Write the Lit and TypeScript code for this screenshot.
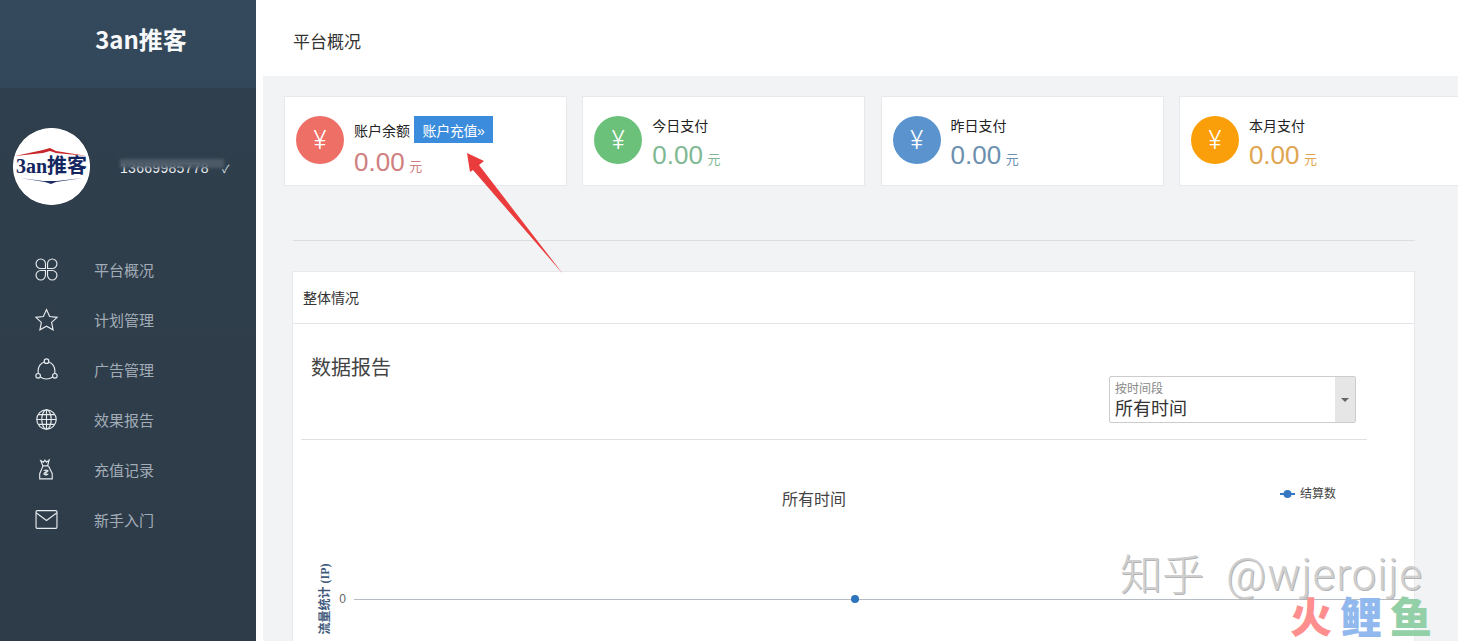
import { LitElement, html, css, svg } from "lit";
import { customElement } from "lit/decorators.js";

const icons = [
  svg`<path d="M10 10H5.500a4.500 4.500 0 1 1 4.500-4.500zM12 10V5.500a4.500 4.500 0 1 1 4.500 4.500zM10 12H5.500a4.500 4.500 0 1 0 4.500 4.500zM12 12v4.500a4.500 4.500 0 1 0 4.500-4.500z" />`,
  svg`<path d="M11 1.500l3 6.600 7.200.8-5.300 4.900 1.400 7.100L11 17.400l-6.300 3.500 1.400-7.100L.8 8.900 8 8.100z" />`,
  svg`<circle cx="11" cy="3" r="2.200"/><circle cx="3" cy="17" r="2.200"/><circle cx="19" cy="17" r="2.200"/><path d="M8.900 3.800C5.500 5 3 8.500 3 12.500c0 .7 0 1.500.2 2.200M13.100 3.800C16.500 5 19 8.500 19 12.500c0 .7 0 1.500-.2 2.200M5.100 18.100c3.400 2.600 8.400 2.600 11.800 0" />`,
  svg`<circle cx="11" cy="11" r="9.300"/><ellipse cx="11" cy="11" rx="4.500" ry="9.300"/><path d="M11 1.700v18.600M1.700 11h18.600M3 6.300h16M3 15.700h16"/>`,
  svg`<path d="M7.500 7.500L5.500 2.500l2.500 1.500L9.500 2l1.500 2 2.500-2-1.500 5.500zM7.500 7.500h5.500M7.500 8l-3 7v5h12v-5l-3.500-7M8.500 12.500c0-1.200 4-1.500 4 0 0 1.500-4 1-4 2.500 0 1.500 4 1.200 4 0M10.500 11v6" />`,
  svg`<rect x="1" y="2.500" width="20" height="17" rx="1"/><path d="M1 4.500l10 7.500 10-7.500" />`,
];

const navItems = ["平台概况", "计划管理", "广告管理", "效果报告", "充值记录", "新手入门"];

const cards = [
  { label: "账户余额", cls: "red", cta: true },
  { label: "今日支付", cls: "green", cta: false },
  { label: "昨日支付", cls: "blue", cta: false },
  { label: "本月支付", cls: "orange", cta: false },
];

@customElement("app-root")
export class AppRoot extends LitElement {
  static styles = css`
    :host { display: block; width: 1458px; height: 641px; overflow: hidden; position: relative; background: #fff; font-family: "Liberation Sans", "Noto Sans CJK SC", sans-serif; }
    .layout { display: flex; height: 641px; }
    .side { width: 256px; flex: none; background: linear-gradient(180deg, #303f4d 0%, #2e3c49 100%); color: #fff; }
    .brand { height: 88px; display: flex; align-items: center; justify-content: center; padding: 0 0 11px 26px; box-sizing: border-box; font-size: 24px; font-weight: 700; color: #f6f8f9; background: linear-gradient(180deg, #34495b, #33475a); font-family: "Noto Sans CJK SC", sans-serif; }
    .user { display: flex; align-items: center; height: 77px; margin-top: 40px; padding-left: 13px; position: relative; }
    .avatar { width: 77px; height: 77px; border-radius: 50%; background: #fff; flex: none; }
    .phone { margin-left: 30px; margin-top: 2px; font-size: 14px; color: #eef1f3; white-space: nowrap; letter-spacing: .3px; }
    .phone span { margin-left: 13px; font-size: 11px; color: #dfe4e8; }
    .smudge { position: absolute; left: 120px; top: 31px; width: 104px; height: 9px; background: #4e5c6a; filter: blur(1.500px); opacity: .95; }
    nav { margin-top: 39px; }
    .item { display: flex; align-items: center; height: 50px; padding-left: 35px; font-size: 15px; color: #a3adb8; }
    .item svg { width: 23px; height: 23px; flex: none; fill: none; stroke: #e6ebee; stroke-width: 1.100; }
    .item b { font-weight: 400; margin-left: 36px; }
    .wrap { flex: 1; min-width: 0; padding-left: 7px; }
    .top { height: 76px; display: flex; align-items: center; padding: 4px 0 0 30px; box-sizing: border-box; font-size: 17px; color: #333; }
    .page { height: 565px; background: #f1f3f5; padding: 20px 0 0 21px; box-sizing: border-box; overflow: hidden; }
    .cards { display: flex; gap: 15.300px; width: 1300px; }
    .card { width: 283px; height: 90px; flex: none; box-sizing: border-box; background: #fff; border: 1px solid #e7e9ec; display: flex; padding: 19px 0 0 11px; }
    .coin { width: 48px; height: 48px; border-radius: 50%; flex: none; color: #fff; font-size: 25px; font-weight: 300; font-family: Roboto, sans-serif; display: flex; align-items: center; justify-content: center; }
    .text { margin-left: 10px; }
    .label { font-size: 14px; color: #222; height: 22px; display: flex; align-items: center; margin-top: -2px; }
    .card.cta .label { margin-top: 0; height: 27px; }
    .btn { margin-left: 4px; height: 27px; width: 79px; display: flex; align-items: center; justify-content: center; background: #3b8cdc; color: #fff; font-size: 14px; letter-spacing: -.4px; }
    .value { font-size: 26px; line-height: 30px; margin-top: 4px; white-space: nowrap; }
    .value small { font-size: 13px; margin-left: 1px; }
    .red .coin { background: #ee6f66; } .red .value { color: #d08080; }
    .green .coin { background: #6cc17a; } .green .value { color: #7fb994; }
    .blue .coin { background: #5b93cf; } .blue .value { color: #6c90ae; }
    .orange .coin { background: #fa9f0a; } .orange .value { color: #e0a550; }
    .rule { width: 1122px; height: 1px; margin: 54px 0 0 9px; background: #dcdfe2; }
    .panel { width: 1123px; margin: 30px 0 0 8px; box-sizing: border-box; background: #fff; border: 1px solid #e7e9ec; height: 400px; }
    .panel-head { height: 52px; box-sizing: border-box; border-bottom: 1px solid #e2e4e7; display: flex; align-items: center; padding: 0 0 1px 10px; font-size: 14px; color: #333; }
    .title-row { display: flex; justify-content: space-between; height: 116px; box-sizing: border-box; margin-left: 8px; width: 1066px; border-bottom: 1px solid #dfe1e3; }
    h2 { margin: 29px 0 0 10px; font-size: 20px; font-weight: 400; color: #444; line-height: 30px; }
    .select { margin: 52px 11px 0 0; width: 247px; height: 47px; box-sizing: border-box; border: 1px solid #ccc; border-radius: 2px; display: flex; }
    .sel-text { flex: 1; padding: 4px 0 0 5px; }
    .sel-text div:first-child { font-size: 12px; color: #888; line-height: 16px; }
    .sel-text div:last-child { font-size: 18px; color: #333; line-height: 24px; }
    .caret { width: 20px; background: #e6e6e6; display: flex; align-items: center; justify-content: center; }
    .caret i { width: 0; height: 0; border: 4px solid transparent; border-top: 4px solid #666; border-bottom: 0; }
    .chart { display: block; width: 1121px; height: 201px; }
    .chart text { font-family: "Liberation Sans", "Noto Sans CJK SC", sans-serif; }
    .t-title { font-size: 16px; fill: #444; text-anchor: middle; }
    .t-leg { font-size: 12px; fill: #444; }
    .t-y { font-size: 12px; fill: #666; text-anchor: end; }
    .chart .t-axis { font-size: 12px; font-weight: 700; fill: #3f5a7c; text-anchor: middle; font-family: "Liberation Serif", "Noto Sans CJK SC", serif; }
    .arrow { position: absolute; left: 0; top: 0; width: 1458px; height: 641px; pointer-events: none; }
    .mark { position: absolute; left: 1120px; top: 547px; font-size: 42px; line-height: 50px; color: #cfcfcf; text-shadow: 1px 1px 0 #b4b4b4; white-space: nowrap; font-weight: 300; font-family: "Noto Sans CJK SC", sans-serif; }
    .mark span { font-family: Roboto, sans-serif; font-size: 44px; letter-spacing: 1px; margin-left: 22px; font-weight: 300; }
    .mark2 { position: absolute; left: 1290px; top: 597px; font-size: 42px; line-height: 36px; letter-spacing: 8px; font-weight: 900; white-space: nowrap; font-family: "Noto Sans CJK SC", sans-serif; }
    .mark2 .a { color: #ff8f8f; } .mark2 .b { color: #92b9ee; } .mark2 .c { color: #93d0a8; }
  `;

  render() {
    return html`
      <div class="layout">
        <aside class="side">
          <div class="brand">3an推客</div>
          <div class="user">
            <svg class="avatar" viewBox="0 0 77 77">
              <circle cx="38.500" cy="38.500" r="38.500" fill="#fff" />
              <path d="M2 28L30 22l7-2 6 3 31 5-31-3-6-2-7 2z" fill="#c9262c" />
              <text x="38.500" y="45" text-anchor="middle" font-size="20" font-weight="700" fill="#14265f" font-family="'Liberation Serif','Noto Sans CJK SC',serif">3an推客</text>
              <path d="M7 50L30 53h14L70 50l-27 4-5 2-6-2z" fill="#1f2f66" />
            </svg>
            <div class="phone">13669985778<span>✓</span></div>
            <div class="smudge"></div>
          </div>
          <nav>
            ${navItems.map(
              (n, i) => html`<div class="item"><svg viewBox="0 0 22 22">${icons[i]}</svg><b>${n}</b></div>`
            )}
          </nav>
        </aside>
        <div class="wrap">
          <div class="top">平台概况</div>
          <div class="page">
            <div class="cards">
              ${cards.map(
                (c) => html`<div class="card ${c.cls} ${c.cta ? "cta" : ""}">
                  <div class="coin">¥</div>
                  <div class="text">
                    <div class="label">${c.label}${c.cta ? html`<div class="btn">账户充值»</div>` : ""}</div>
                    <div class="value">0.00<small> 元</small></div>
                  </div>
                </div>`
              )}
            </div>
            <div class="rule"></div>
            <section class="panel">
              <div class="panel-head">整体情况</div>
              <div class="title-row">
                <h2>数据报告</h2>
                <div class="select">
                  <div class="sel-text"><div>按时间段</div><div>所有时间</div></div>
                  <div class="caret"><i></i></div>
                </div>
              </div>
              <svg class="chart" viewBox="293 440 1121 201">
                <text class="t-title" x="814" y="505">所有时间</text>
                <path d="M1280 494h15" stroke="#3577c0" stroke-width="2" />
                <circle cx="1287.500" cy="494" r="4" fill="#3577c0" />
                <text class="t-leg" x="1300" y="498">结算数</text>
                <text class="t-y" x="346" y="603">0</text>
                <path d="M354 599.500H1414" stroke="#b5bcc4" stroke-width="1" />
                <circle cx="855" cy="599" r="4" fill="#2e74bd" />
                <text class="t-axis" transform="translate(329 599) rotate(-90)">流量统计 (IP)</text>
              </svg>
            </section>
          </div>
        </div>
      </div>
      <svg class="arrow" viewBox="0 0 1458 641">
        <path d="M467 153L484 161 479 165 563 274 473 170 470 172z" fill="#ea3c3c" />
      </svg>
      <div class="mark">知乎<span>@wjeroije</span></div>
      <div class="mark2"><span class="a">火</span><span class="b">鲤</span><span class="c">鱼</span></div>
    `;
  }
}
